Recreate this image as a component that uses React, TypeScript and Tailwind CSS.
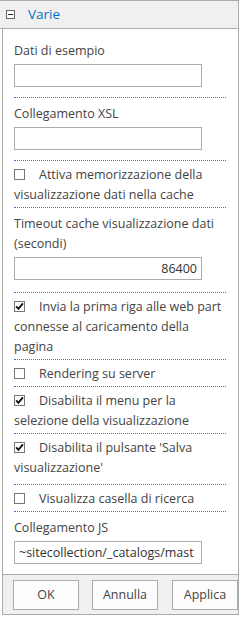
import React from 'react';

const FONT = "font-['Open_Sans',_'Liberation_Sans',_sans-serif]";

function Field({
  label,
  value = '',
  align = 'left',
  first = false,
  last = false,
  tall = false,
}: {
  label: React.ReactNode;
  value?: string;
  align?: 'left' | 'right';
  first?: boolean;
  last?: boolean;
  tall?: boolean;
}) {
  return (
    <div
      className={`${first ? 'pt-[12px]' : 'pt-[6px]'} ${tall ? 'pb-[12px]' : 'pb-[10px]'} ${
        last ? '' : 'border-b border-dotted border-[#3a74d6]'
      }`}
    >
      <div className="leading-[20px] text-[#444]">{label}</div>
      <div
        className={`mt-[3px] h-[23px] w-[188px] border border-[#ababab] bg-white px-[4px] leading-[21px] text-[#333] overflow-hidden whitespace-nowrap ${
          align === 'right' ? 'text-right' : 'text-left'
        }`}
      >
        {value}
      </div>
    </div>
  );
}

function Check({
  checked,
  loose,
  children,
}: {
  checked?: boolean;
  loose?: boolean;
  children: React.ReactNode;
}) {
  return (
    <div
      className={`pt-[4px] ${loose ? 'pb-[6px]' : 'pb-[2px]'} border-b border-dotted border-[#3a74d6] leading-[20px] text-[#444]`}
    >
      <span className="relative top-[1px] mr-[14px] inline-block h-[11px] w-[11px] border border-[#777] bg-white align-baseline">
        {checked && (
          <svg viewBox="0 0 11 11" className="absolute -left-[1px] -top-[1px] h-[11px] w-[11px]">
            <path d="M2.2 5.4 L4.4 7.8 L8.9 2.4" fill="none" stroke="#111" strokeWidth="1.9" />
          </svg>
        )}
      </span>
      {children}
    </div>
  );
}

function Button({ children }: { children: React.ReactNode }) {
  return (
    <div className="flex h-[30px] w-[66px] items-center justify-center border border-[#ababab] bg-[#fdfdfd] text-[12.5px] text-[#444]">
      {children}
    </div>
  );
}

export default function App() {
  return (
    <div className={`h-[622px] w-[247px] bg-white text-[12.5px] ${FONT}`}>
      <div className="w-[239px]">
        <div className="flex h-[29px] items-center border-t border-r border-b border-[#ababab] bg-[#f0f0f0]">
          <span className="relative ml-[6px] inline-block h-[9px] w-[9px] border border-[#666] bg-white">
            <span className="absolute left-[1px] top-[3px] h-[1px] w-[5px] bg-[#222]" />
          </span>
          <span className="ml-[13px] text-[13.5px] text-[#0072c6]">Varie</span>
        </div>

        <div className="ml-[2px] border-l border-r border-[#ababab] pl-[11px] pr-[12px]">
          <Field first label="Dati di esempio" />
          <Field label="Collegamento XSL" />
          <Check>
            Attiva memorizzazione della
            <br />
            visualizzazione dati nella cache
          </Check>
          <Field
            tall
            label={
              <>
                Timeout cache visualizzazione dati
                <br />
                (secondi)
              </>
            }
            value="86400"
            align="right"
          />
          <Check checked>
            Invia la prima riga alle web part
            <br />
            connesse al caricamento della
            <br />
            pagina
          </Check>
          <Check>Rendering su server</Check>
          <Check checked>
            Disabilita il menu per la
            <br />
            selezione della visualizzazione
          </Check>
          <Check checked loose>
            Disabilita il pulsante 'Salva
            <br />
            visualizzazione'
          </Check>
          <Check>Visualizza casella di ricerca</Check>
          <Field last label="Collegamento JS" value="~sitecollection/_catalogs/mast" />
        </div>

        <div className="ml-[2px] flex border border-[#ababab] bg-[#f0f0f0] pl-[10px] pt-[5px] pb-[4px]">
          <Button>OK</Button>
          <div className="ml-[13px]">
            <Button>Annulla</Button>
          </div>
          <div className="ml-[14px] -mr-[1px]">
            <Button>Applica</Button>
          </div>
        </div>
      </div>
    </div>
  );
}
